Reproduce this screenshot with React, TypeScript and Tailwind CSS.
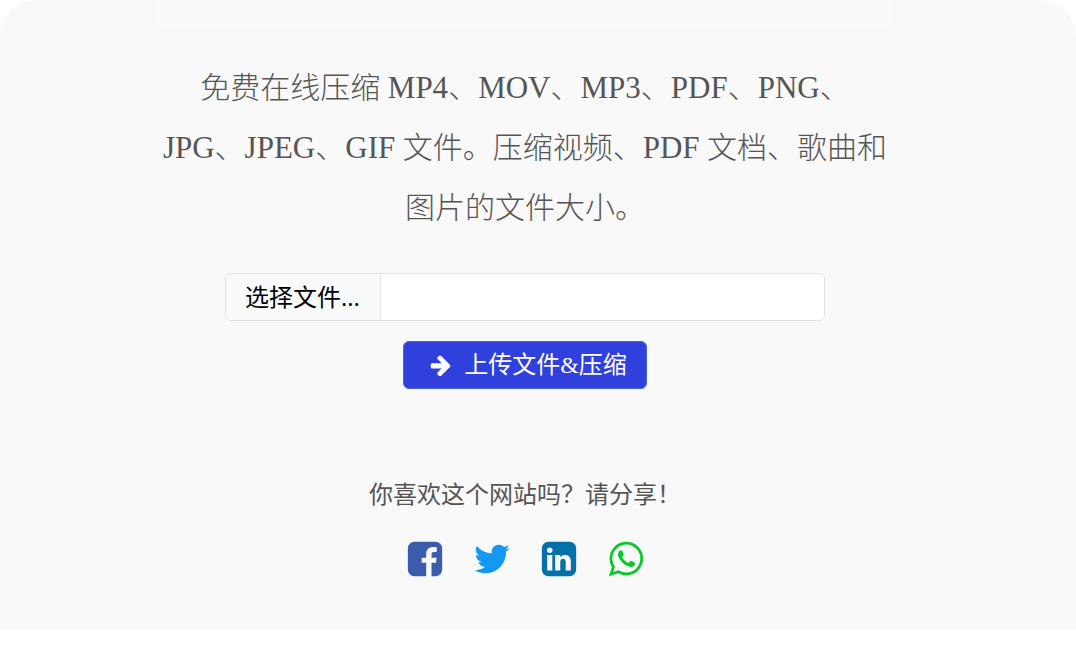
import React, { useState } from 'react';

interface IconProps {
  path: string;
  className: string;
}

const Icon: React.FC<IconProps> = ({ path, className }) => (
  <svg viewBox="0 0 1792 1792" fill="currentColor" aria-hidden="true" className={className}>
    <path d={path} />
  </svg>
);

// Latin runs look small next to the CJK glyphs, so they get a slightly larger size
const Latin: React.FC<{ children: React.ReactNode }> = ({ children }) => (
  <span className="text-[31px] leading-none">{children}</span>
);

const ARROW_RIGHT =
  'M1600 960q0 54-37 91l-651 651q-39 37-91 37-51 0-90-37l-75-75q-38-38-38-91t38-91l293-293h-704q-52 0-84.5-37.5t-32.5-90.5v-128q0-53 32.5-90.5t84.5-37.5h704l-293-294q-38-36-38-90t38-90l75-75q38-38 90-38 53 0 91 38l651 651q37 35 37 90z';

const shareLinks = [
  {
    name: 'Facebook',
    color: 'text-[#3b5bad]',
    path: 'M1376 128q119 0 203.5 84.5t84.5 203.5v960q0 119-84.5 203.5t-203.5 84.5h-188v-595h199l30-232h-229v-148q0-56 23.5-84t91.5-28l122-1v-207q-63-9-178-9-136 0-217.5 80t-81.5 226v171h-200v232h200v595h-532q-119 0-203.5-84.5t-84.5-203.5v-960q0-119 84.5-203.5t203.5-84.5h960z',
  },
  {
    name: 'Twitter',
    color: 'text-[#1498f3]',
    path: 'M1684 408q-67 98-162 167 1 14 1 42 0 130-38 259.5t-115.5 248.5-184.5 210.5-258 146-323 54.5q-271 0-496-145 35 4 78 4 225 0 401-138-105-2-188-64.5t-114-159.5q33 5 61 5 43 0 85-11-112-23-185.5-111.5t-73.5-205.5v-4q68 38 146 41-66-44-105-115t-39-154q0-88 44-163 121 149 294.5 238.5t371.5 99.5q-8-38-8-74 0-134 94.5-228.5t228.5-94.5q140 0 236 102 109-21 205-78-37 115-142 178 93-10 186-50z',
  },
  {
    name: 'LinkedIn',
    color: 'text-[#0670a8]',
    path: 'M365 1414h231v-694h-231v694zm246-908q-1-52-36-86t-93-34-94.5 34-36.5 86q0 51 35.5 85.5t92.5 34.5h1q59 0 95-34.5t36-85.5zm585 908h231v-398q0-154-73-233t-193-79q-136 0-209 117h2v-101h-231q3 66 0 694h231v-388q0-38 7-56 15-35 45-59.5t74-24.5q116 0 116 157v371zm468-998v960q0 119-84.5 203.5t-203.5 84.5h-960q-119 0-203.5-84.5t-84.5-203.5v-960q0-119 84.5-203.5t203.5-84.5h960q119 0 203.5 84.5t84.5 203.5z',
  },
  {
    name: 'WhatsApp',
    color: 'text-[#0bc62c]',
    path: 'M1113 974q13 0 97.5 44t89.5 53q2 5 2 15 0 33-17 76-16 39-71 65.5t-102 26.5q-57 0-190-62-98-45-170-118t-148-185q-72-107-71-194v-8q3-91 74-158 24-22 52-22 6 0 18 1.5t19 1.5q19 0 26.5 6.5t15.5 27.5q8 20 33 88t25 75q0 21-34.5 57.5t-34.5 46.5q0 7 5 15 34 73 102 137 56 53 151 101 12 7 22 7 15 0 54-48.5t52-48.5zm-203 530q127 0 243.5-50t200.5-134 134-200.5 50-243.5-50-243.5-134-200.5-200.5-134-243.5-50-243.5 50-200.5 134-134 200.5-50 243.5q0 203 120 368l-79 233 242-77q158 104 345 104zm0-1382q153 0 292.5 60t240.5 161 161 240.5 60 292.5-60 292.5-161 240.5-240.5 161-292.5 60q-195 0-365-94l-417 134 136-405q-108-178-108-389 0-153 60-292.5t161-240.5 240.5-161 292.5-60z',
  },
];

const App: React.FC = () => {
  const [fileName, setFileName] = useState('');

  const handleChange = (e: React.ChangeEvent<HTMLInputElement>) => {
    setFileName(e.target.files?.[0]?.name ?? '');
  };

  return (
    <div className="min-h-screen bg-white">
      <main
        lang="zh-CN"
        className="flex flex-col items-center rounded-t-[36px] bg-[#f9f9f9] pr-[26px] pb-[50px] font-['Liberation_Serif','Noto_Sans_CJK_SC',sans-serif] text-[#555]"
      >
        {/* Ad strip */}
        <div className="h-[27px] w-full max-w-[736px] bg-[#fafafa]" />

        <p className="mt-[31px] text-center text-[30px] leading-[60px] font-light">
          免费在线压缩 <Latin>MP4</Latin>、<Latin>MOV</Latin>、<Latin>MP3</Latin>、
          <Latin>PDF</Latin>、<Latin>PNG</Latin>、
          <br />
          <Latin>JPG</Latin>、<Latin>JPEG</Latin>、<Latin>GIF</Latin> 文件。压缩视频、
          <Latin>PDF</Latin> 文档、歌曲和
          <br />
          图片的文件大小。
        </p>

        <form
          className="mt-[35px] flex w-full max-w-[600px] flex-col items-center gap-5"
          onSubmit={(e) => e.preventDefault()}
        >
          <label className="relative flex h-12 w-full overflow-hidden rounded-md border border-[#dee2e6] bg-white text-2xl focus-within:border-[#3040dc]">
            <span className="flex items-center border-r border-[#dee2e6] bg-[#f8fafc] pr-5 pl-[19px] font-['Open_Sans','Noto_Sans_CJK_SC',sans-serif] text-black">
              选择文件...
            </span>
            <span className="flex min-w-0 flex-1 items-center truncate px-4">{fileName}</span>
            <input
              type="file"
              onChange={handleChange}
              className="absolute inset-0 cursor-pointer opacity-0"
            />
          </label>

          <button
            type="submit"
            className="flex h-12 items-center gap-[11px] rounded-md border border-[#4a64dc] bg-[#3040dc] pr-[19px] pl-[25px] text-2xl text-white"
          >
            <Icon path={ARROW_RIGHT} className="size-6" />
            上传文件&amp;压缩
          </button>
        </form>

        <p className="mt-[86px] text-2xl leading-9 font-['Noto_Sans_CJK_SC',sans-serif]">
          你喜欢这个网站吗？请分享！
        </p>

        <div className="mt-7 flex gap-[27px]">
          {shareLinks.map((link) => (
            <a key={link.name} href="#" aria-label={link.name} className={link.color}>
              <Icon path={link.path} className="size-10" />
            </a>
          ))}
        </div>
      </main>
    </div>
  );
};

export default App;
